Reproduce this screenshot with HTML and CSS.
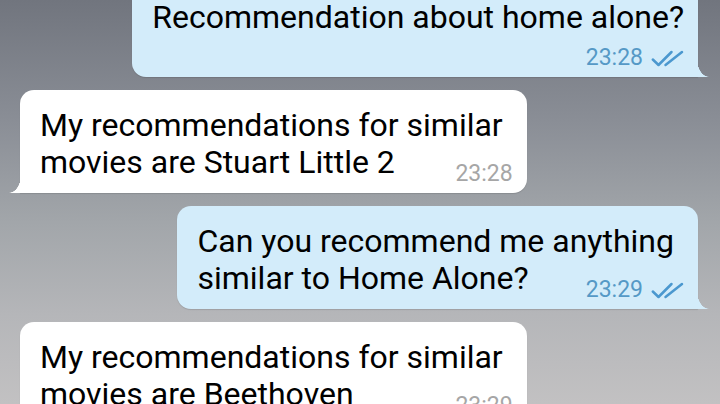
FILE: index.html
```html
<!DOCTYPE html>
<html lang="en">
<head>
<meta charset="utf-8">
<title>Chat</title>
<link rel="stylesheet" href="styles.css">
</head>
<body>
<main class="chat">
  <div class="msg out single">
    <p class="text">Recommendation about home alone?</p>
    <span class="meta"><span class="time">23:28</span><svg class="checks" viewBox="0 0 33 17" width="33" height="17"><path d="M1.8 9.5 L7.5 15 L20.5 2 M14.5 15 L31 2"/></svg></span>
  </div>
  <div class="msg in">
    <p class="text">My recommendations for similar<br>movies are Stuart Little 2</p>
    <span class="meta"><span class="time">23:28</span></span>
  </div>
  <div class="msg out">
    <p class="text">Can you recommend me anything<br>similar to Home Alone?</p>
    <span class="meta"><span class="time">23:29</span><svg class="checks" viewBox="0 0 33 17" width="33" height="17"><path d="M1.8 9.5 L7.5 15 L20.5 2 M14.5 15 L31 2"/></svg></span>
  </div>
  <div class="msg in">
    <p class="text">My recommendations for similar<br>movies are Beethoven</p>
    <span class="meta"><span class="time">23:29</span></span>
  </div>
</main>
</body>
</html>
```
FILE: styles.css
```css
* { box-sizing: border-box; }
html, body {
  margin: 0;
  width: 720px;
  height: 404px;
  overflow: hidden;
}
body {
  background: linear-gradient(180deg, #71757e 0%, #8a8e96 30%, #a2a6aa 55%, #b5b6b9 78%, #c2c1c2 100%);
  font-family: Roboto, "Noto Sans", sans-serif;
}
.chat {
  display: flex;
  flex-direction: column;
  gap: 13px;
  margin-top: -18px;
}
.msg {
  position: relative;
  display: grid;
  width: fit-content;
  padding: 17px 14px 9px 20px;
  border-radius: 14px;
  box-shadow: 0 1px 1px rgba(0, 0, 0, 0.12);
}
.msg.in {
  background: #ffffff;
  margin-left: 20px;
  border-bottom-left-radius: 0;
}
.msg.out {
  background: #d3ecfa;
  align-self: flex-end;
  margin-right: 22px;
  border-bottom-right-radius: 0;
}
.msg.in::before,
.msg.out::before {
  content: "";
  position: absolute;
  bottom: 0;
  width: 12px;
  height: 18px;
}
.msg.in::before {
  left: -11px;
  background: radial-gradient(ellipse 12px 18px at 0 0, transparent 97%, #ffffff 100%);
}
.msg.out::before {
  right: -11px;
  background: radial-gradient(ellipse 12px 18px at 100% 0, transparent 97%, #d3ecfa 100%);
}
.text {
  grid-area: 1 / 1;
  margin: 0 10px 3px 0;
  font-size: 32px;
  line-height: 37px;
  color: #000;
  white-space: nowrap;
}
.meta {
  grid-area: 1 / 1;
  justify-self: end;
  align-self: end;
  display: flex;
  align-items: center;
  gap: 8px;
  height: 20px;
}
.single .meta {
  grid-area: 2 / 1;
  margin-top: 12px;
}
.single .text { margin: 0; }
.time {
  font-size: 23px;
  line-height: 20px;
}
.in .time { color: #a6a6a6; }
.out .time { color: #5599c6; }
.checks {
  display: block;
  fill: none;
  stroke: #4b98cf;
  stroke-width: 2.5;
  stroke-linecap: round;
  stroke-linejoin: round;
  margin-right: 0;
}
```
